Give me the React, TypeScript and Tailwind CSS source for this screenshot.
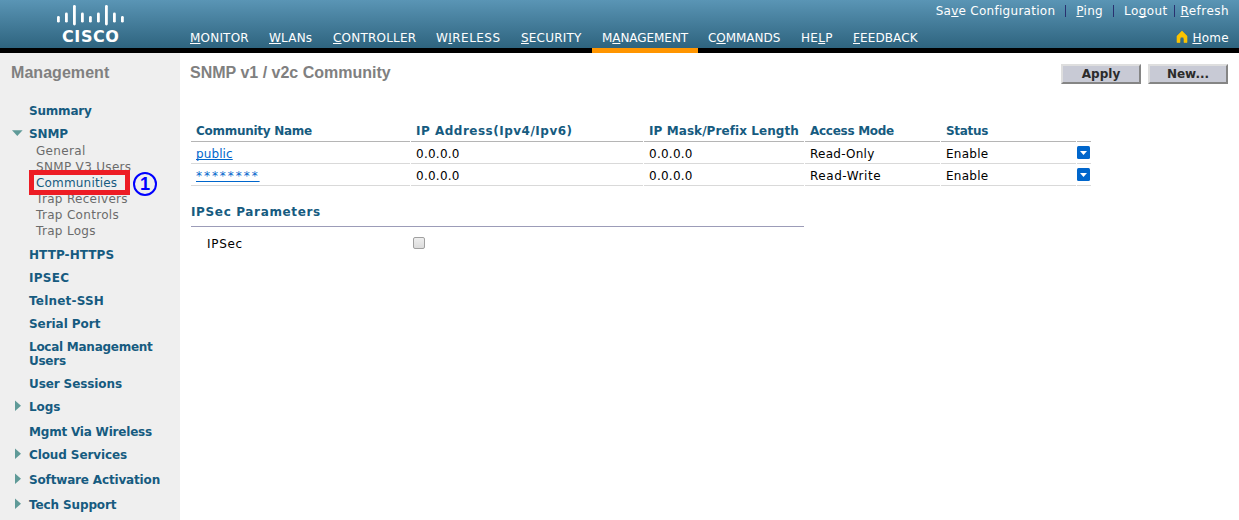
import React from "react";

type Key = { pre?: string; k: string; post: string };

const underlined = "underline decoration-1 underline-offset-1 [text-decoration-skip-ink:none]";

function Mnemonic({ pre = "", k, post }: Key) {
  return (
    <>
      {pre}
      <span className={underlined}>{k}</span>
      {post}
    </>
  );
}

const nav: (Key & { w: string; t: string; active?: boolean })[] = [
  { k: "M", post: "ONITOR", w: "w-[79px]", t: "tracking-[0.2px]" },
  { k: "W", post: "LANs", w: "w-[64px]", t: "tracking-[0.2px]" },
  { k: "C", post: "ONTROLLER", w: "w-[103px]", t: "tracking-[0.2px]" },
  { pre: "W", k: "I", post: "RELESS", w: "w-[85px]", t: "tracking-[0.45px]" },
  { k: "S", post: "ECURITY", w: "w-[81px]", t: "tracking-[0.2px]" },
  { pre: "M", k: "A", post: "NAGEMENT", w: "w-[106px]", t: "tracking-[-0.06px]", active: true },
  { pre: "C", k: "O", post: "MMANDS", w: "w-[93px]", t: "tracking-[-0.05px]" },
  { pre: "HE", k: "L", post: "P", w: "w-[52px]", t: "tracking-[0.3px]" },
  { k: "F", post: "EEDBACK", w: "w-[85px]", t: "tracking-[0.1px]" },
];

const bars = [
  [16, 22.5], [12.7, 22.5], [5, 25.3], [12.7, 22.5], [16, 22.5],
  [12.7, 22.5], [5, 25.3], [12.7, 22.5], [16, 22.5],
];

function Logo() {
  return (
    <div className="flex w-[180px] flex-col items-start">
      <svg width="180" height="28" className="block">
        {bars.map(([a, b], i) => (
          <line key={i} x1={58.4 + i * 8} x2={58.4 + i * 8} y1={a + 1.3} y2={b - 1.3} stroke="#fff" strokeWidth="2.8" strokeLinecap="round" />
        ))}
      </svg>
      <div className="ml-[62px] h-[20px] text-[16px] leading-[18px] font-bold tracking-[0.6px] text-white">CISCO</div>
    </div>
  );
}

function Header() {
  return (
    <header className="flex h-[53px] border-b-[5px] border-black bg-linear-to-b from-[#5a95b5] to-[#2e647f] text-white">
      <Logo />
      <nav className="flex h-[53px] items-end">
        {nav.map((n) => (
          <div
            key={n.post}
            className={`${n.w} ${n.t} flex h-[25px] items-start pl-[10px] leading-[14px] pt-[3px] whitespace-nowrap ${n.active ? "border-b-[5px] border-[#ff9500]" : ""}`}
          >
            <div><Mnemonic pre={n.pre} k={n.k} post={n.post} /></div>
          </div>
        ))}
      </nav>
      <div className="ml-auto flex h-12 flex-col items-end pr-[10px] leading-[14px] tracking-[0.28px]">
        <div className="mt-1 flex items-center">
          <div><Mnemonic pre="Sa" k="v" post="e Configuration" /></div>
          <div className="ml-[10px] h-3 w-px bg-[#29306f]" />
          <div className="ml-[10px]"><Mnemonic k="P" post="ing" /></div>
          <div className="ml-[10px] h-3 w-px bg-[#29306f]" />
          <div className="ml-[10px] tracking-[0.4px]"><Mnemonic pre="Lo" k="g" post="out" /></div>
          <div className="ml-[6px] h-3 w-px bg-[#29306f]" />
          <div className="ml-[6px] tracking-[0.45px]"><Mnemonic k="R" post="efresh" /></div>
        </div>
        <div className="mt-[13px] flex items-start">
          <svg width="12" height="13" viewBox="0 0 12 13" className="mr-[4px] block">
            <path d="M6 0 L11 5 V11.5 H8 V8 Q8 6 6 6 Q4 6 4 8 V11.5 H1 V5 Z" fill="#fbc400" stroke="#fbc400" strokeWidth="0.6" strokeLinejoin="round" />
          </svg>
          <div><Mnemonic k="H" post="ome" /></div>
        </div>
      </div>
    </header>
  );
}

function Arrow({ down = false }: { down?: boolean }) {
  return (
    <svg width="12" height="12" className="block shrink-0">
      {down ? <path d="M0 3.3H10.6L5.3 9Z" fill="#5f9a98" /> : <path d="M3 0.5V11L9 5.7Z" fill="#5f9a98" />}
    </svg>
  );
}

type Item = { label: string; h: string; t: string; arrow?: "down" | "right"; subs?: string[] };

const items: Item[] = [
  { label: "Summary", h: "h-[23px]", t: "tracking-[-0.2px]" },
  { label: "SNMP", h: "h-[16px]", t: "tracking-[-0.1px]", arrow: "down", subs: ["General", "SNMP V3 Users", "Communities", "Trap Receivers", "Trap Controls", "Trap Logs"] },
  { label: "HTTP-HTTPS", h: "h-[23px]", t: "tracking-[0.08px]" },
  { label: "IPSEC", h: "h-[23px]", t: "tracking-[0.3px]" },
  { label: "Telnet-SSH", h: "h-[23px]", t: "tracking-[0.2px]" },
  { label: "Serial Port", h: "h-[23px]", t: "tracking-[-0.05px]" },
  { label: "Local Management Users", h: "h-[37px]", t: "tracking-[-0.26px]" },
  { label: "User Sessions", h: "h-[23px]", t: "tracking-[-0.1px]" },
  { label: "Logs", h: "h-[25px]", t: "tracking-[-0.1px]", arrow: "right" },
  { label: "Mgmt Via Wireless", h: "h-[23px]", t: "tracking-[-0.2px]" },
  { label: "Cloud Services", h: "h-[25px]", t: "tracking-[-0.1px]", arrow: "right" },
  { label: "Software Activation", h: "h-[25px]", t: "tracking-[-0.16px]", arrow: "right" },
  { label: "Tech Support", h: "h-[16px]", t: "tracking-[-0.12px]", arrow: "right" },
];

function Sidebar() {
  return (
    <aside className="h-[467px] w-[180px] overflow-hidden bg-[#efefef]">
      <h2 className="h-[51px] pt-[10px] pl-[11px] font-['Liberation_Sans'] text-base leading-[19px] font-bold tracking-[0.05px] text-[#808080]">Management</h2>
      {items.map((it) => (
        <div key={it.label}>
          <div className={`${it.h} ${it.t} flex items-start pl-[12px] text-[12px] leading-[14px] font-bold text-[#165b80]`}>
            <div className="w-[17px]">{it.arrow && <Arrow down={it.arrow === "down"} />}</div>
            <div className="w-[140px]">{it.label}</div>
          </div>
          {it.subs && (
            <div className="h-[105px] pl-[36px] leading-4 tracking-[0.32px] text-[#6b6b6b]">
              {it.subs.map((s) =>
                s === "Communities" ? (
                  <div key={s} className="relative h-4 tracking-[0.18px] text-[#165b80]">
                    <div className="absolute -top-[5px] -left-[7px] z-10 h-[25px] w-[101px] border-[5px] border-[#ed1c24] bg-[#efefef] pl-[2px]">{s}</div>
                    <div className="absolute -top-[3px] left-[97px] flex size-[24px] items-center justify-center rounded-full border-2 border-[#0000ff] font-['Liberation_Sans'] text-[18px] font-bold text-[#0000ff]">1</div>
                  </div>
                ) : (
                  <div key={s}>{s}</div>
                )
              )}
            </div>
          )}
        </div>
      ))}
    </aside>
  );
}

function Button({ children }: { children: React.ReactNode }) {
  return (
    <button className="h-5 w-20 border-2 border-t-[#dedede] border-r-[#858585] border-b-[#858585] border-l-[#dedede] bg-[#c8cad5] text-[12px] leading-4 font-bold text-[#2b2b2b]">
      {children}
    </button>
  );
}

const cols = "grid grid-cols-[219px_232px_160px_135px_135px_14px] gap-x-px";

function Row({ name, mode }: { name: string; mode: string }) {
  const cell = "h-[22px] border-b border-[#d9d9d9] pl-[5px] pt-[4px] tracking-[0.25px]";
  return (
    <div className={`${cols} leading-[16px] text-black`}>
      <div className={cell}>
        <a className={`${underlined} text-[#0066cc] ${name === "public" ? "tracking-[0.1px]" : "tracking-[1.95px]"}`}>{name}</a>
      </div>
      <div className={cell}>0.0.0.0</div>
      <div className={cell}>0.0.0.0</div>
      <div className={`${cell} ${mode === "Read-Write" ? "tracking-[0.55px]" : ""}`}>{mode}</div>
      <div className={cell}>Enable</div>
      <div className="h-[22px] border-b border-[#d9d9d9] pt-[4px]">
        <svg width="13" height="13" className="block">
          <rect width="13" height="13" rx="1.5" fill="#0066cc" />
          <path d="M3 5H10L6.5 9Z" fill="#fff" />
        </svg>
      </div>
    </div>
  );
}

function Main() {
  const head = "h-[20px] border-b border-[#b5b5b5] pl-[5px] pt-px whitespace-nowrap";
  return (
    <main className="flex-1 pl-[11px]">
      <div className="flex h-[69px] justify-between pr-[11px]">
        <h1 className="-ml-px pt-[10px] font-['Liberation_Sans'] text-base leading-[19px] font-bold text-[#808080]">SNMP v1 / v2c Community</h1>
        <div className="flex gap-[7px] pt-[11px]">
          <Button>Apply</Button>
          <Button>New...</Button>
        </div>
      </div>
      <div className={`${cols} leading-[16px] font-bold text-[#165b80]`}>
        <div className={`${head} tracking-[-0.28px]`}>Community Name</div>
        <div className={`${head} tracking-[0.5px]`}>IP Address(Ipv4/Ipv6)</div>
        <div className={`${head} tracking-[0.08px]`}>IP Mask/Prefix Length</div>
        <div className={`${head} tracking-[-0.28px]`}>Access Mode</div>
        <div className={`${head} tracking-[-0.3px]`}>Status</div>
        <div className={head} />
      </div>
      <Row name="public" mode="Read-Only" />
      <Row name="********" mode="Read-Write" />
      <h3 className="mt-[17px] h-[24px] w-[613px] border-b border-[#9c9cb8] pt-px leading-[16px] font-bold tracking-[0.65px] text-[#165b80]">IPSec Parameters</h3>
      <div className="flex items-start pt-[9px] pl-4 leading-[16px] text-black">
        <label className="w-[206px] tracking-[0.7px]">IPSec</label>
        <div className="mt-px size-3 rounded-[2px] border border-[#a0a0a0] bg-linear-to-b from-[#eeeeee] to-[#dcdcdc]" />
      </div>
    </main>
  );
}

export default function App() {
  return (
    <div className="h-[520px] w-[1239px] overflow-hidden bg-white font-['DejaVu_Sans',sans-serif] text-[12px]">
      <Header />
      <div className="flex">
        <Sidebar />
        <Main />
      </div>
    </div>
  );
}
